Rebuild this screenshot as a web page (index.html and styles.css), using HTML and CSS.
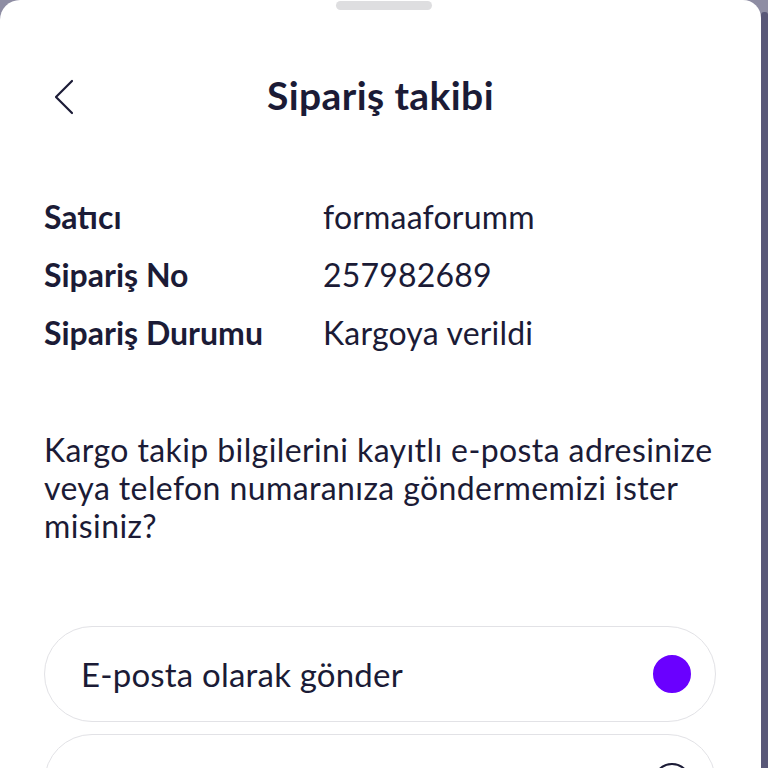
FILE: index.html
```html
<!DOCTYPE html>
<html lang="tr">
<head>
<meta charset="utf-8">
<link rel="stylesheet" href="styles.css">
</head>
<body>
<div class="screen">
  <div class="sheet">
    <div class="handle"></div>
    <header class="header">
      <button class="back" aria-label="Geri">
        <svg width="22" height="36" viewBox="0 0 22 36"><path d="M19 2 L3 18 L19 34" fill="none" stroke="#1b1b36" stroke-width="2.2" stroke-linecap="round" stroke-linejoin="round"/></svg>
      </button>
      <h1 class="title">Sipariş takibi</h1>
    </header>
    <dl class="info">
      <dt>Satıcı</dt><dd>formaaforumm</dd>
      <dt>Sipariş No</dt><dd>257982689</dd>
      <dt>Sipariş Durumu</dt><dd>Kargoya verildi</dd>
    </dl>
    <p class="question">Kargo takip bilgilerini kayıtlı e-posta adresinize veya telefon numaranıza göndermemizi ister misiniz?</p>
    <div class="options">
      <label class="option">
        <span class="option-text">E-posta olarak gönder</span>
        <span class="radio radio-on"></span>
      </label>
      <label class="option option-partial">
        <span class="option-text"></span>
        <span class="radio"></span>
      </label>
    </div>
  </div>
  <div class="strip"></div>
</div>
</body>
</html>
```
FILE: styles.css
```css
* { box-sizing: border-box; }
html, body { margin: 0; padding: 0; }
body {
  background: #8e8da3;
  font-family: Lato, "Noto Sans", sans-serif;
  color: #1b1b36;
  overflow: hidden;
}
.screen {
  display: flex;
  height: 768px;
  width: 768px;
}
.sheet {
  flex: 1;
  background: #fff;
  border-radius: 20px 18px 0 0;
  overflow: hidden;
}
.strip {
  width: 7px;
  margin-top: 12px;
  background: #595878;
  border-radius: 3px 3px 0 0;
}
.handle {
  width: 96px;
  height: 9px;
  margin: 1px 0 0 336px;
  background: #dedee0;
  border-radius: 5px;
}
.header {
  position: relative;
  height: 60px;
  margin-top: 55px;
  display: flex;
  align-items: center;
  justify-content: center;
}
.back {
  position: absolute;
  left: 53px;
  top: 14px;
  background: none;
  border: 0;
  padding: 0;
  display: flex;
}
.title {
  margin: 0;
  font-size: 39px;
  font-weight: 700;
  letter-spacing: 0.4px;
}
.info {
  margin: 62px 0 0 44px;
  display: grid;
  grid-template-columns: 279px auto;
  grid-auto-rows: 58px;
  align-items: center;
  font-size: 32px;
}
.info dt { font-weight: 700; }
.info dd { margin: 0; letter-spacing: 0.2px; }
.question {
  margin: 70px 0 0 44px;
  width: 690px;
  font-size: 32px;
  line-height: 38px;
  letter-spacing: 0.4px;
}
.options {
  margin: 81px 0 0 44px;
  width: 672px;
  display: flex;
  flex-direction: column;
  gap: 12px;
}
.option {
  height: 96px;
  border: 1.5px solid #e2e2e6;
  border-radius: 48px;
  display: flex;
  align-items: center;
  justify-content: space-between;
  padding: 0 24px 0 36px;
  font-size: 33px;
  letter-spacing: 0.2px;
}
.radio {
  width: 38px;
  height: 38px;
  border-radius: 50%;
  border: 2.5px solid #1b1b36;
}
.radio-on {
  background: #6a00ff;
  border-color: #6a00ff;
}
```
